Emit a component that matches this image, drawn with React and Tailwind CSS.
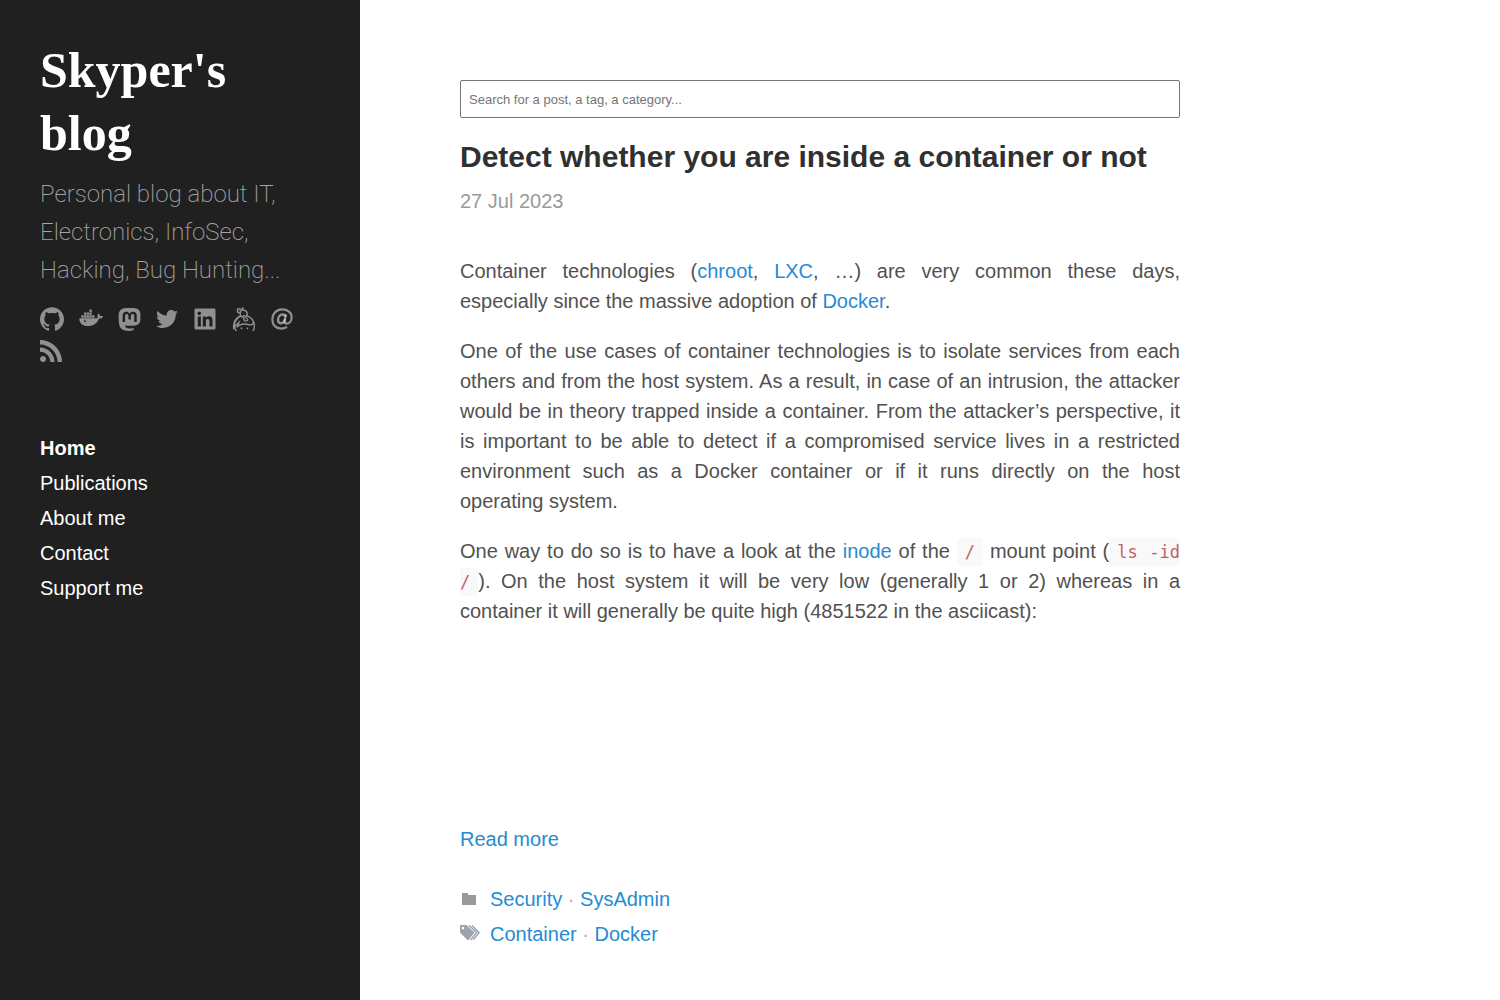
import { SiGithub, SiMastodon, SiKeybase, SiRss } from "react-icons/si";
import { FaTwitter, FaLinkedin } from "react-icons/fa";

function Whale() {
  return (
    <svg viewBox="0 0 24 24" className="size-6" fill="currentColor" aria-hidden="true">
      <path d="M10.4 2.5h2.4v2.4h-2.4zM5 5.4h2.4v2.4H5zM7.7 5.4h2.4v2.4H7.7zM10.4 5.4h2.4v2.4h-2.4zM2.3 8.3h2.4v2.4H2.3zM5 8.3h2.4v2.4H5zM7.7 8.3h2.4v2.4H7.7zM10.4 8.3h2.4v2.4h-2.4zM13.1 8.3h2.4v2.4h-2.4z" />
      <path fillRule="evenodd" d="M.4 11.2h16.4c1.2 0 1.900-.4 2.2-.8-.7-1.200-.6-2.700.3-3.900 1 .6 1.600 1.500 1.700 2.600 1-.3 2.100-.2 3 .3-.7 1.600-2 2.200-4 2.200-1.800 4.900-5.400 7.500-10.700 7.500C3.800 19.1.1 16.6.4 11.2zM6 13.300a.9.9 0 1 0 0 1.800.9.9 0 0 0 0-1.800z" />
    </svg>
  );
}

function At() {
  return (
    <svg viewBox="0 0 24 24" className="size-[22px]" fill="none" stroke="currentColor" aria-hidden="true">
      <path strokeWidth="2.4" d="M17.5 20.6C15.7 21.8 13.5 22.4 11.2 22.4 5.2 22.4 1.5 18.6 1.5 12.7 1.5 6.3 6 1.6 12.2 1.6c6 0 10.3 3.5 10.3 8.7 0 4.2-2.6 6.7-5.4 6.7-1.9 0-2.6-1.2-2.2-3.2l1.4-7" />
      <path strokeWidth="2.6" d="M15.6 9.7c-.3-1.6-1.4-2.6-3-2.6-2.9 0-4.9 2.6-4.9 5.6 0 2.3 1.2 3.9 3.1 3.9 2.3 0 4-2 4.5-4.6" />
    </svg>
  );
}

function Tags() {
  return (
    <svg viewBox="0 0 20 18" className="h-[18px] w-5" fill="currentColor" aria-hidden="true">
      <path fillRule="evenodd" d="M0 1.5Q0 1 .5 1H6.500L14.500 8.500 8.500 16Q8 16.500 7.500 16L0 8.500zM3 2.800a1.300 1.300 0 1 0 0 2.600 1.300 1.300 0 0 0 0-2.600z" />
      <path fill="none" stroke="currentColor" strokeWidth="1.4" d="M9 1.200l7.500 7.300-6 7.600M12 1.500l7.200 7.200-6 7" />
    </svg>
  );
}

const social = [
  ["GitHub", <SiGithub size={24} />],
  ["Docker", <Whale />],
  ["Mastodon", <SiMastodon size={23} />],
  ["Twitter", <FaTwitter size={22} />],
  ["LinkedIn", <FaLinkedin size={24} />],
  ["Keybase", <SiKeybase size={24} />],
  ["Email", <At />],
  ["RSS", <SiRss size={22} />],
];

const nav = ["Publications", "About me", "Contact", "Support me"];

function Link({ children }) {
  return <a href="#" className="text-[#268bd2] hover:underline">{children}</a>;
}

function Code({ children }) {
  return (
    <code className="rounded-[3px] bg-[#f9f9f9] px-2 py-1 font-['DejaVu_Sans_Mono',monospace] text-[17px] leading-none text-[#bf616a]">
      {children}
    </code>
  );
}

export default function App() {
  return (
    <div className="flex min-h-screen bg-white font-['Liberation_Sans',Arial,sans-serif] text-[20px] leading-[30px] text-[#515151]">
      <aside className="w-[360px] shrink-0 bg-[#202020] px-10 pt-[39px] text-white/50">
        <h1 className="font-['Liberation_Serif',serif] text-[50px] font-bold leading-[63px] text-white">
          <a href="#">Skyper's blog</a>
        </h1>
        <p className="mt-2.5 font-['Roboto',sans-serif] text-[24px] font-extralight leading-[38px] text-white/60">
          Personal blog about IT, Electronics, InfoSec, Hacking, Bug Hunting...
        </p>
        <div className="mt-[18px] flex flex-wrap gap-x-[15px] gap-y-2">
          {social.map(([name, icon]) => (
            <a key={name} href="#" aria-label={name} className="flex h-6 items-center">
              {icon}
            </a>
          ))}
        </div>
        <nav className="mt-[68px] flex flex-col text-white leading-[35px]">
          <a href="#" className="font-bold">Home</a>
          {nav.map((n) => <a key={n} href="#">{n}</a>)}
        </nav>
      </aside>
      <main className="ml-[100px] mr-10 max-w-[720px] flex-1 pt-20">
        <input
          aria-label="Search"
          type="text"
          placeholder="Search for a post, a tag, a category..."
          className="block h-[38px] w-full rounded-[2px] border border-[#767676] px-2 text-[13px] placeholder:text-[#757575]"
        />
        <h2 className="mt-5 text-[30px] font-bold leading-[38px] text-[#303030]">
          <a href="#">Detect whether you are inside a container or not</a>
        </h2>
        <time className="mt-2.5 block text-[#9a9a9a]">27 Jul 2023</time>
        <div className="mt-10 flex flex-col gap-5 text-justify">
          <p>
            Container technologies (<Link>chroot</Link>, <Link>LXC</Link>, …) are very common these days, especially since the massive adoption of <Link>Docker</Link>.
          </p>
          <p>
            One of the use cases of container technologies is to isolate services from each others and from the host system. As a result, in case of an intrusion, the attacker would be in theory trapped inside a container. From the attacker’s perspective, it is important to be able to detect if a compromised service lives in a restricted environment such as a Docker container or if it runs directly on the host operating{"\u00a0"}system.
          </p>
          <p>
            One way to do so is to have a look at the <Link>inode</Link> of the <Code>/</Code> mount point (<Code>ls -id /</Code>). On the host system it will be very low (generally 1 or 2) whereas in a container it will generally be quite high (4851522 in the asciicast):
          </p>
        </div>
        <div className="mt-[198px]"><Link>Read more</Link></div>
        <div className="mt-7 flex flex-col text-[#9a9a9a] leading-[35px]">
          <div className="flex items-center">
            <svg viewBox="0 0 18 14" className="mr-3 h-[14px] w-[18px]" fill="currentColor" aria-hidden="true"><path d="M2 0h6v2h8v10H2z" /></svg>
            <span><Link>Security</Link> <span className="text-[#b0b0b0]">·</span> <Link>SysAdmin</Link></span>
          </div>
          <div className="flex items-center">
            <span className="mr-2.5 pb-1 text-[#9ca3af]"><Tags /></span>
            <span><Link>Container</Link> <span className="text-[#b0b0b0]">·</span> <Link>Docker</Link></span>
          </div>
        </div>
      </main>
    </div>
  );
}
